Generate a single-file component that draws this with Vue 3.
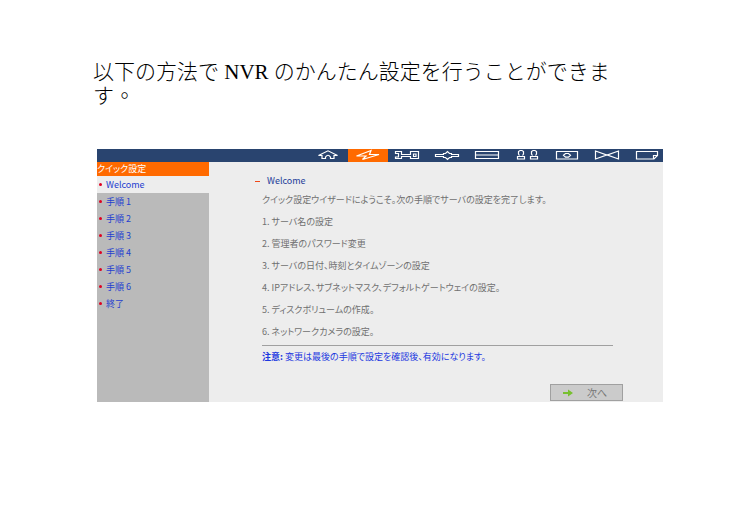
<template>
    <main class="page">
        <h1>以下の方法で NVR のかんたん設定を行うことができます。</h1>
        <section class="panel">
            <nav class="topbar">
                <button
                    v-for="icon in icons"
                    :key="icon.name"
                    type="button"
                    :class="{ active: icon.name === activeIcon }"
                    :aria-label="icon.name"
                    @click="activeIcon = icon.name"
                >
                    <svg viewBox="0 0 40 13" width="40" height="13">
                        <path :d="icon.path" />
                    </svg>
                </button>
            </nav>
            <div class="body">
                <aside>
                    <h2>クイック設定</h2>
                    <ul>
                        <li v-for="step in steps" :key="step" :class="{ current: step === currentStep }">
                            <a href="#" @click.prevent="currentStep = step">{{ step }}</a>
                        </li>
                    </ul>
                </aside>
                <div class="content">
                    <h3>Welcome</h3>
                    <div class="text">
                        <p>クイック設定ウイザードにようこそ。次の手順でサーバの設定を完了します。</p>
                        <p v-for="(task, index) in tasks" :key="task">{{ index + 1 }}. {{ task }}</p>
                        <p class="note"><strong>注意:</strong> 変更は最後の手順で設定を確認後、有効になります。</p>
                    </div>
                    <button type="button" class="next" @click="nextStep">
                        <svg viewBox="0 0 10 8" width="10" height="8">
                            <path d="M0 3H5V0.5L10 4L5 7.5V5H0Z" />
                        </svg>
                        <span>次へ</span>
                    </button>
                </div>
            </div>
        </section>
    </main>
</template>
<script setup>
import { ref } from "vue";

const activeIcon = ref("quick");
const currentStep = ref("Welcome");

const icons = [
    { name: "home", path: "M10.5 6.5L20 1.8L29.5 6.5H26V9.5H22.5V8Q20 4.5 17.5 8V9.5H14V6.5Z" },
    { name: "quick", path: "M23 1.5L8.5 7H18L14.5 10.5L31 5.5H21.5Z" },
    { name: "system", path: "M7.5 2.5H13.5V5.5H22.5V2.5H30.5V9.5H22.5V7.5H13.5V9.5H7.5V8H10.5V4.5H7.5ZM25.5 5H28V7.5H25.5Z" },
    { name: "network", path: "M7.5 5.5H15.5V4.5H17.5L19.5 2.5L21.5 4.5H23.5V5.5H30.5V7.5H23.5V8.5H21.5L19.5 10.5L17.5 8.5H15.5V7.5H7.5Z" },
    { name: "disk", path: "M7.5 2.5H30.5V9.5H7.5ZM7.5 6H30.5" },
    { name: "users", path: "M11.5 6.5L10.5 5V2.5L12 1.5H14L15.5 2.5V5L14.5 6.5M9.5 10V7.5H16.5V10ZM24.5 6.5L23.5 5V2.5L25 1.5H27L28.5 2.5V5L27.5 6.5M22.5 10V7.5H29.5V10Z" },
    { name: "camera", path: "M8.5 2.5H29.5V10H8.5ZM15.5 6.2L17.5 4.5H20.5L22.5 6.2L20.5 8.2H17.5Z" },
    { name: "events", path: "M7.5 2L19 6L30.5 2V10L19 6L7.5 10Z" },
    { name: "log", path: "M8.5 2.5H29.5V6.5L26 10H8.5ZM25.5 9.5V6.5H29.5" },
];

const steps = ["Welcome", "手順 1", "手順 2", "手順 3", "手順 4", "手順 5", "手順 6", "終了"];

const tasks = [
    "サーバ名の設定",
    "管理者のパスワード変更",
    "サーバの日付、時刻とタイムゾーンの設定",
    "IPアドレス、サブネットマスク、デフォルトゲートウェイの設定。",
    "ディスクボリュームの作成。",
    "ネットワークカメラの設定。",
];

//Method to move to the next step
const nextStep = () => {
    const index = steps.indexOf(currentStep.value);
    currentStep.value = steps[Math.min(index + 1, steps.length - 1)];
}
</script>
<style>
body {
    margin: 0;
    background: white;
}
</style>
<style scoped>
* {
    margin: 0;
    padding: 0;
    box-sizing: border-box;
}

.page {
    padding: 60px 87px 40px 97px;
    font-family: "Noto Sans CJK JP", sans-serif;
    font-size: 9px;
}

h1 {
    margin: 0 32px 41px -4px;
    font-family: "Liberation Serif", "Noto Sans CJK TC", serif;
    font-size: 21px;
    line-height: 24px;
    font-weight: 300;
    color: black;
}

.topbar {
    display: flex;
    justify-content: flex-end;
    height: 13px;
    background: #29446f;
    overflow: hidden;
}

.topbar button {
    display: flex;
    flex: none;
    width: 40px;
    border: none;
    background: none;
    cursor: pointer;
}

.topbar button:last-child {
    width: 35px;
}

.topbar button.active {
    background: #ff6a00;
}

.topbar svg {
    flex: none;
    fill: none;
    stroke: white;
    stroke-width: 1.2;
}

.body {
    display: flex;
    background: #ededed;
}

aside {
    width: 112px;
    background: #bababa;
}

h2 {
    height: 14px;
    background: #ff6a00;
    color: white;
    font-size: 9px;
    line-height: 14px;
    font-weight: 400;
    font-feature-settings: "palt";
}

ul {
    list-style: none;
}

li {
    display: flex;
    align-items: center;
    gap: 4px;
    height: 17px;
    padding-left: 2px;
}

li::before {
    content: "";
    width: 3px;
    height: 3px;
    border-radius: 50%;
    background: #e00020;
}

li.current {
    background: #ededed;
}

li a {
    color: #2440d0;
    text-decoration: none;
}

.content {
    display: flex;
    flex: 1;
    flex-direction: column;
    padding: 12px 40px 0 46px;
}

h3 {
    display: flex;
    align-items: center;
    gap: 7px;
    margin-bottom: 1px;
    font-size: 9px;
    line-height: 14px;
    font-weight: 400;
    color: #24409a;
}

h3::before {
    content: "";
    width: 5px;
    height: 1px;
    background: #f04818;
}

.text {
    padding: 0 10px 0 7px;
    font-feature-settings: "palt";
}

p {
    line-height: 22px;
    color: #707070;
}

.note {
    margin-top: 2px;
    border-top: 1px solid #a0a0a0;
    color: #1c38e0;
}

.next {
    display: flex;
    align-items: center;
    align-self: flex-end;
    gap: 14px;
    width: 73px;
    height: 17px;
    margin: 16px 0 1px;
    padding-left: 12px;
    border: 1px solid #a0a0a0;
    background: #cbcbcb;
    color: #777777;
    font-family: inherit;
    font-size: 10px;
    cursor: pointer;
}

.next svg {
    fill: #78c030;
}
</style>
